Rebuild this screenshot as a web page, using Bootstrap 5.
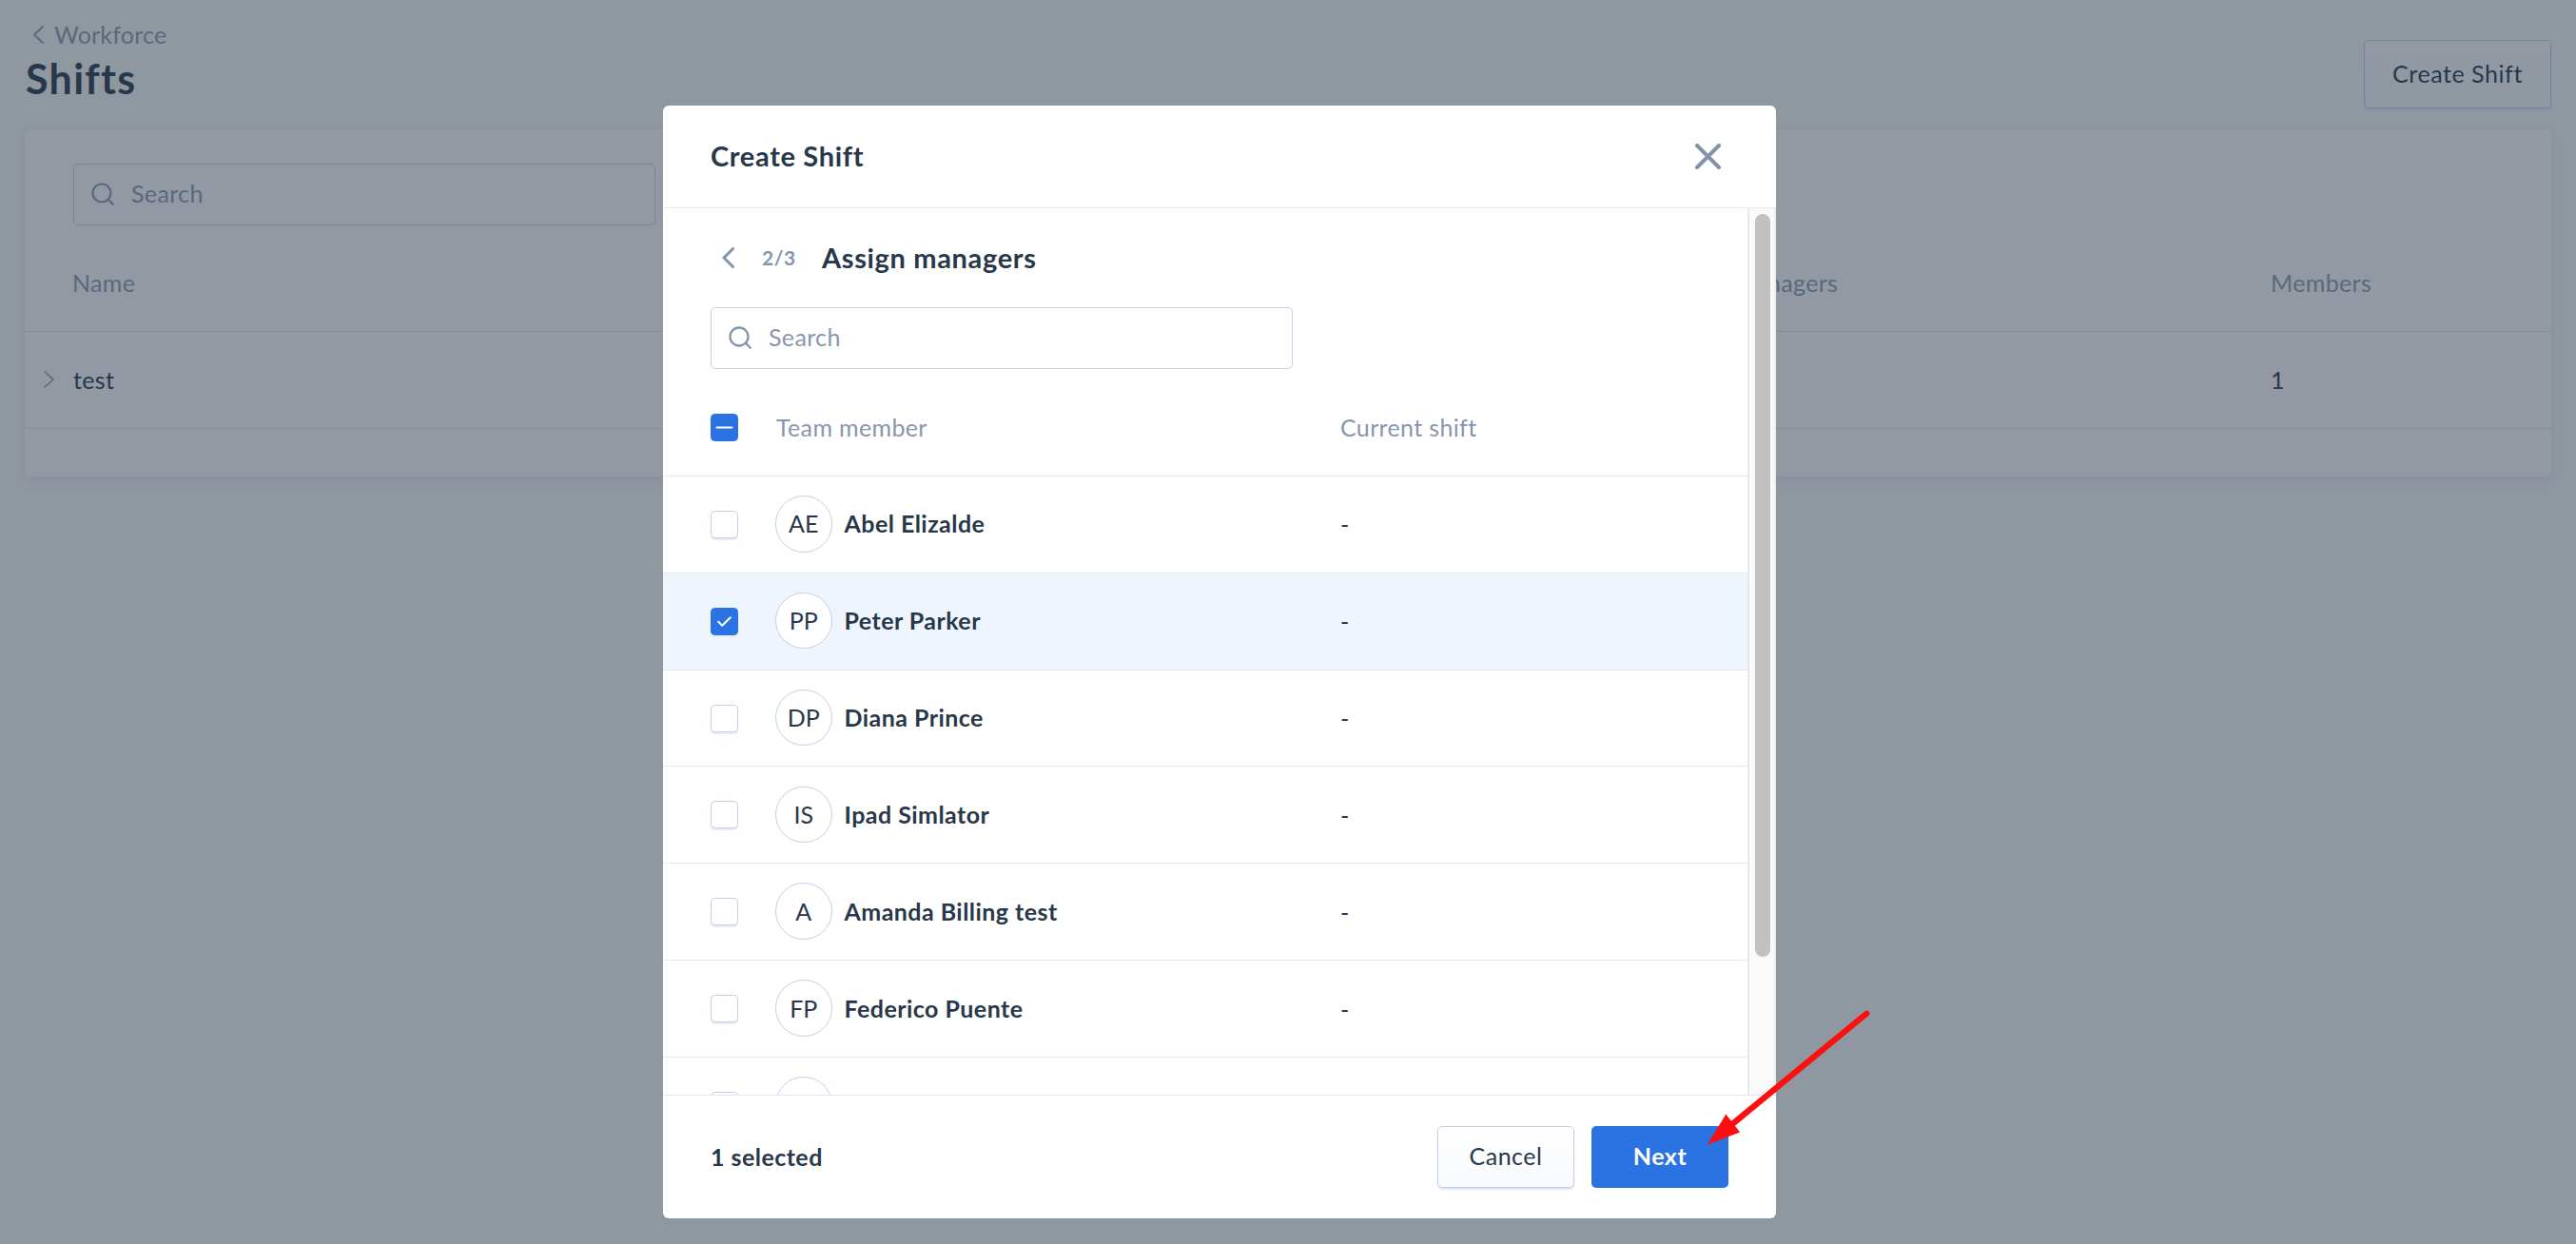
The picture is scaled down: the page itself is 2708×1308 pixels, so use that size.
<!DOCTYPE html>
<html lang="en">
<head>
<meta charset="utf-8">
<title>Shifts</title>
<link rel="stylesheet" href="https://cdn.jsdelivr.net/npm/bootstrap@5.3.0/dist/css/bootstrap.min.css">
<script src="https://cdn.jsdelivr.net/npm/bootstrap@5.3.0/dist/js/bootstrap.bundle.min.js"></script>
<style>
  body { font: 400 25px/30px Lato, "Open Sans", sans-serif; letter-spacing: .35px; color: #28374a; background: #8f97a0; height: 1308px; overflow: hidden; }
  svg { display: block; flex: none; fill: none; stroke-linecap: round; stroke-linejoin: round; }

  /* page behind the dialog, in its dimmed colours */
  .page-wrap { padding: 21px 26px 0; }
  .page-head { height: 115px; }
  .crumb { color: #5a687d; padding-left: 9px; gap: 11px; letter-spacing: .2px; }
  .page-title { font-size: 43px; line-height: 52px; font-weight: 700; letter-spacing: 1.3px; color: #28374a; padding-left: 1px; margin-top: 6px; }
  .btn-dim { width: 197px; height: 72px; margin-top: 21px; border: 1px solid #76839b; border-radius: 5px; background: linear-gradient(#9299a3, #8f97a0); box-shadow: 0 2px 2px #8490a5; color: #28374a; font-size: 25px; letter-spacing: .55px; padding: 0; }
  .panel { height: 365px; border-radius: 6px; background: #9299a3; box-shadow: 0 0 4px 1px #8c92a1, 0 5px 8px #8b91a0; }
  .panel-top { padding: 36px 0 0 51px; height: 112px; }
  .panel-row { border-bottom: 1px solid #858d9c; padding-bottom: 2px; }
  .panel-row.heads { height: 101px; color: #5a687d; }
  .panel-row.entry { height: 102px; }
  .p-name { width: 1796px; padding-left: 20px; }
  .p-name.plain { padding-left: 50px; }
  .p-mgr { width: 565px; }

  .search-box { width: 612px; height: 65px; border: 1px solid #c3cfe3; border-radius: 5px; color: #8796ad; padding: 0 0 1px 18px; gap: 18px; }
  .search-box span { padding-bottom: 2px; }
  .search-dim { border-color: #76839b; color: #5a687d; }

  /* dialog */
  .dlg { left: 697px; top: 111px; width: 1170px; height: 1170px; border-radius: 6px; background: #fff; }
  .dlg-head { height: 108px; padding: 0 58px 0 50px; border-bottom: 1px solid #e3e8f2; }
  .dlg-head .h-text { padding-bottom: 2px; }
  .h-text { font-size: 29px; line-height: 36px; font-weight: 700; letter-spacing: .65px; color: #28374a; margin: 0; }
  .dlg-body { height: 932px; }
  .step-bar { height: 104px; padding: 34px 0 0 62px; }
  .step-no { font-size: 21px; font-weight: 700; letter-spacing: .5px; color: #8796ad; width: 63px; margin-left: 29px; }
  .search-wrap { padding-left: 50px; height: 66px; }
  .m-row { height: 101.83px; flex: none; padding-left: 50px; border-bottom: 1px solid #e3e8f1; }
  .m-heads { height: 112px; color: #8796ad; padding-top: 10px; }
  .m-heads div { padding-bottom: 2px; }
  .m-on { background: #eef5fe; }
  .tick { width: 29px; height: 29px; flex: none; border: 1px solid #c3cfe8; border-radius: 4.5px; background: #fff; box-shadow: 0 2px 1px #e6ebf5; margin: 0; }
  .tick-on { background: #2b73e2; border-color: #2b73e2; }
  .tick-flat { box-shadow: none; }
  .who { width: 594px; margin-left: 39px; }
  .m-heads .who { margin-left: 40px; width: 593px; }
  .face { width: 59.5px; height: 59.5px; flex: none; border: 1.4px solid #c3cfe8; background: #fff; letter-spacing: 0; margin: 0 13px 1px 0; padding-bottom: 1px; }
  .full-name { font-weight: 700; letter-spacing: .45px; padding-bottom: 2px; }
  .track { width: 30px; background: #fafafa; border-left: 2px solid #e8e8e8; border-right: 2px solid #ededed; padding: 6px 0 0 6px; }
  .thumb { width: 16px; height: 781px; background: #c1c1c1; border-radius: 8px; }
  .dlg-foot { height: 130px; border-top: 1px solid #e3e6f1; padding: 0 50px 0 50px; }
  .foot-btn { width: 144px; height: 65px; border-radius: 5px; font-size: 25px; padding: 0 0 1px; letter-spacing: .5px; }
  .btn-cancel { border: 1px solid #c3cfe8; background: linear-gradient(#fff, #f8fafd); box-shadow: 0 2px 2px #dfe5f1; color: #28374a; margin-right: 18px; }
  .btn-next { background: #2b73e2; border: 0; color: #fff; font-weight: 700; }
  .pointer-arrow { left: 1780px; top: 1050px; }
</style>
</head>
<body class="position-relative">
<div class="page-wrap">
  <header class="page-head d-flex justify-content-between align-items-start">
    <div>
      <div class="crumb d-flex align-items-center">
        <svg width="11" height="19" viewBox="0 0 11 19" stroke="#5a687d" stroke-width="1.8"><path d="M10 1 1 9.500 10 18"/></svg>
        <span>Workforce</span>
      </div>
      <h1 class="page-title mb-0">Shifts</h1>
    </div>
    <button class="btn btn-dim" type="button">Create Shift</button>
  </header>

  <main class="panel">
    <div class="panel-top">
      <div class="search-box search-dim d-flex align-items-center">
        <svg width="24" height="24" viewBox="0 0 24 24" stroke="#5a687d" stroke-width="2.2"><circle cx="11" cy="11" r="9.500"/><path d="m17.800 17.800 5 5"/></svg>
        <span>Search</span>
      </div>
    </div>
    <div class="panel-row heads d-flex align-items-center">
      <div class="p-name plain">Name</div><div class="p-mgr">Managers</div><div>Members</div>
    </div>
    <div class="panel-row entry d-flex align-items-center">
      <div class="p-name d-flex align-items-center">
        <svg class="me-3" width="11" height="18" viewBox="0 0 11 18" stroke="#5a687d" stroke-width="1.600"><path d="m1 1 9 8-9 8"/></svg>
        <span class="ps-1">test</span>
      </div>
      <div class="p-mgr"></div><div>1</div>
    </div>
  </main>
</div>

<section class="dlg position-absolute" role="dialog" aria-label="Create Shift">
  <div class="dlg-head d-flex align-items-center justify-content-between">
    <h2 class="h-text">Create Shift</h2>
    <svg width="27" height="27" viewBox="0 0 27 27" stroke="#8293ab" stroke-width="4"><path d="m2 2 23 23M25 2 2 25"/></svg>
  </div>

  <div class="dlg-body d-flex overflow-hidden">
    <div class="flex-grow-1 d-flex flex-column overflow-hidden">
      <div class="step-bar d-flex align-items-start flex-shrink-0">
        <div class="d-flex align-items-center">
          <svg width="13" height="22" viewBox="0 0 13 22" stroke="#8293ab" stroke-width="3"><path d="M11.500 1.500 2 11l9.500 9.500"/></svg>
          <span class="step-no">2/3</span>
          <h3 class="h-text">Assign managers</h3>
        </div>
      </div>
      <div class="search-wrap flex-shrink-0">
        <div class="search-box d-flex align-items-center">
          <svg width="24" height="24" viewBox="0 0 24 24" stroke="#8293ab" stroke-width="2.300"><circle cx="11" cy="11" r="9.500"/><path d="m17.800 17.800 5 5"/></svg>
          <span>Search</span>
        </div>
      </div>
      <div class="m-row m-heads d-flex align-items-center">
        <span class="tick tick-on tick-flat d-flex align-items-center justify-content-center"><svg width="19" height="3" viewBox="0 0 19 3" stroke="#fff" stroke-width="2"><path d="M1.500 1.500h16"/></svg></span>
        <div class="who">Team member</div><div>Current shift</div>
      </div>
      <div class="m-row d-flex align-items-center">
        <span class="tick"></span>
        <div class="who d-flex align-items-center"><span class="face rounded-circle d-flex align-items-center justify-content-center">AE</span><span class="full-name">Abel Elizalde</span></div><div>-</div>
      </div>
      <div class="m-row m-on d-flex align-items-center">
        <span class="tick tick-on d-flex align-items-center justify-content-center"><svg width="15" height="11" viewBox="0 0 15 11" stroke="#fff" stroke-width="2"><path d="m1.200 5.800 4 4 8.600-8.600"/></svg></span>
        <div class="who d-flex align-items-center"><span class="face rounded-circle d-flex align-items-center justify-content-center">PP</span><span class="full-name">Peter Parker</span></div><div>-</div>
      </div>
      <div class="m-row d-flex align-items-center">
        <span class="tick"></span>
        <div class="who d-flex align-items-center"><span class="face rounded-circle d-flex align-items-center justify-content-center">DP</span><span class="full-name">Diana Prince</span></div><div>-</div>
      </div>
      <div class="m-row d-flex align-items-center">
        <span class="tick"></span>
        <div class="who d-flex align-items-center"><span class="face rounded-circle d-flex align-items-center justify-content-center">IS</span><span class="full-name">Ipad Simlator</span></div><div>-</div>
      </div>
      <div class="m-row d-flex align-items-center">
        <span class="tick"></span>
        <div class="who d-flex align-items-center"><span class="face rounded-circle d-flex align-items-center justify-content-center">A</span><span class="full-name">Amanda Billing test</span></div><div>-</div>
      </div>
      <div class="m-row d-flex align-items-center">
        <span class="tick"></span>
        <div class="who d-flex align-items-center"><span class="face rounded-circle d-flex align-items-center justify-content-center">FP</span><span class="full-name">Federico Puente</span></div><div>-</div>
      </div>
      <div class="m-row d-flex align-items-center">
        <span class="tick"></span>
        <div class="who d-flex align-items-center"><span class="face rounded-circle"></span></div>
      </div>
    </div>
    <div class="track flex-shrink-0"><div class="thumb"></div></div>
  </div>

  <div class="dlg-foot d-flex align-items-center">
    <span class="full-name me-auto">1 selected</span>
    <button class="btn foot-btn btn-cancel" type="button">Cancel</button>
    <button class="btn foot-btn btn-next" type="button">Next</button>
  </div>
</section>

<svg class="pointer-arrow position-absolute" width="190" height="160" viewBox="1780 1050 190 160"><path d="M1962.300 1065.700 1821 1182" stroke="#fe0f0f" stroke-width="6.200"/><path d="m1794.800 1203.500 19.600-32 14.700 19z" fill="#fe0f0f"/></svg>
</body>
</html>
